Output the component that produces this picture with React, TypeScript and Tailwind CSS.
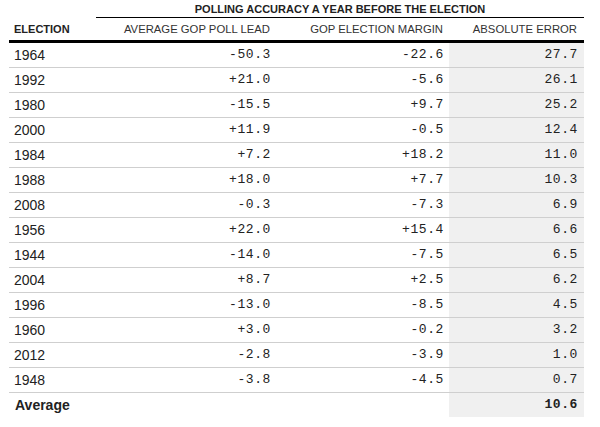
import React from "react";

const rows: [string, string, string, string][] = [
  ["1964", "-50.3", "-22.6", "27.7"],
  ["1992", "+21.0", "-5.6", "26.1"],
  ["1980", "-15.5", "+9.7", "25.2"],
  ["2000", "+11.9", "-0.5", "12.4"],
  ["1984", "+7.2", "+18.2", "11.0"],
  ["1988", "+18.0", "+7.7", "10.3"],
  ["2008", "-0.3", "-7.3", "6.9"],
  ["1956", "+22.0", "+15.4", "6.6"],
  ["1944", "-14.0", "-7.5", "6.5"],
  ["2004", "+8.7", "+2.5", "6.2"],
  ["1996", "-13.0", "-8.5", "4.5"],
  ["1960", "+3.0", "-0.2", "3.2"],
  ["2012", "-2.8", "-3.9", "1.0"],
  ["1948", "-3.8", "-4.5", "0.7"],
];

const sans = "font-['Liberation_Sans',Arial,sans-serif]";
const mono = "font-['Liberation_Mono','Courier_New',monospace] text-[13px] tracking-[0.6px]";

export default function App() {
  return (
    <div className={`w-[600px] h-[427px] bg-white text-[#222] ${sans}`}>
      <div className="ml-[9px] w-[575px] grid grid-cols-[87px_181px_172px_135px]">
        {/* title row */}
        <div className="h-[18px]" />
        <div className="col-span-3 h-[18px] border-b border-black flex items-start justify-center">
          <span className="text-[11px] font-bold leading-[14px] mt-[2px] text-[#222]">
            POLLING ACCURACY A YEAR BEFORE THE ELECTION
          </span>
        </div>
        {/* header row */}
        <div className="h-[25px] border-b-[3px] border-black flex items-end pb-[4px] pl-[5px]">
          <span className="text-[11px] font-bold leading-[14px]">ELECTION</span>
        </div>
        <div className="h-[25px] border-b-[3px] border-black flex items-end justify-end pb-[4px] pr-[7px]">
          <span className="text-[11.3px] leading-[14px] text-[#333]">AVERAGE GOP POLL LEAD</span>
        </div>
        <div className="h-[25px] border-b-[3px] border-black flex items-end justify-end pb-[4px] pr-[6px]">
          <span className="text-[11.3px] leading-[14px] text-[#333]">GOP ELECTION MARGIN</span>
        </div>
        <div className="h-[25px] border-b-[3px] border-black flex items-end justify-end pb-[4px] pr-[7px]">
          <span className="text-[11.3px] leading-[14px] text-[#333]">ABSOLUTE ERROR</span>
        </div>
        {rows.map(([y, a, b, c]) => (
          <React.Fragment key={y}>
            <div className="h-[25px] border-b border-[#cfcfcf] flex items-center pl-[5px] text-[14px]">{y}</div>
            <div className={`h-[25px] border-b border-[#cfcfcf] flex items-center justify-end pr-[6px] ${mono}`}>{a}</div>
            <div className={`h-[25px] border-b border-[#cfcfcf] flex items-center justify-end pr-[5px] ${mono}`}>{b}</div>
            <div className={`h-[25px] border-b border-[#cfcfcf] bg-[#f0f0f0] flex items-center justify-end pr-[6px] ${mono}`}>{c}</div>
          </React.Fragment>
        ))}
        <div className="h-[24px] flex items-center pl-[6px] text-[14px] font-bold">Average</div>
        <div className="h-[24px]" />
        <div className="h-[24px]" />
        <div className={`h-[24px] bg-[#f0f0f0] flex items-center justify-end pr-[6px] font-bold ${mono}`}>10.6</div>
      </div>
    </div>
  );
}
